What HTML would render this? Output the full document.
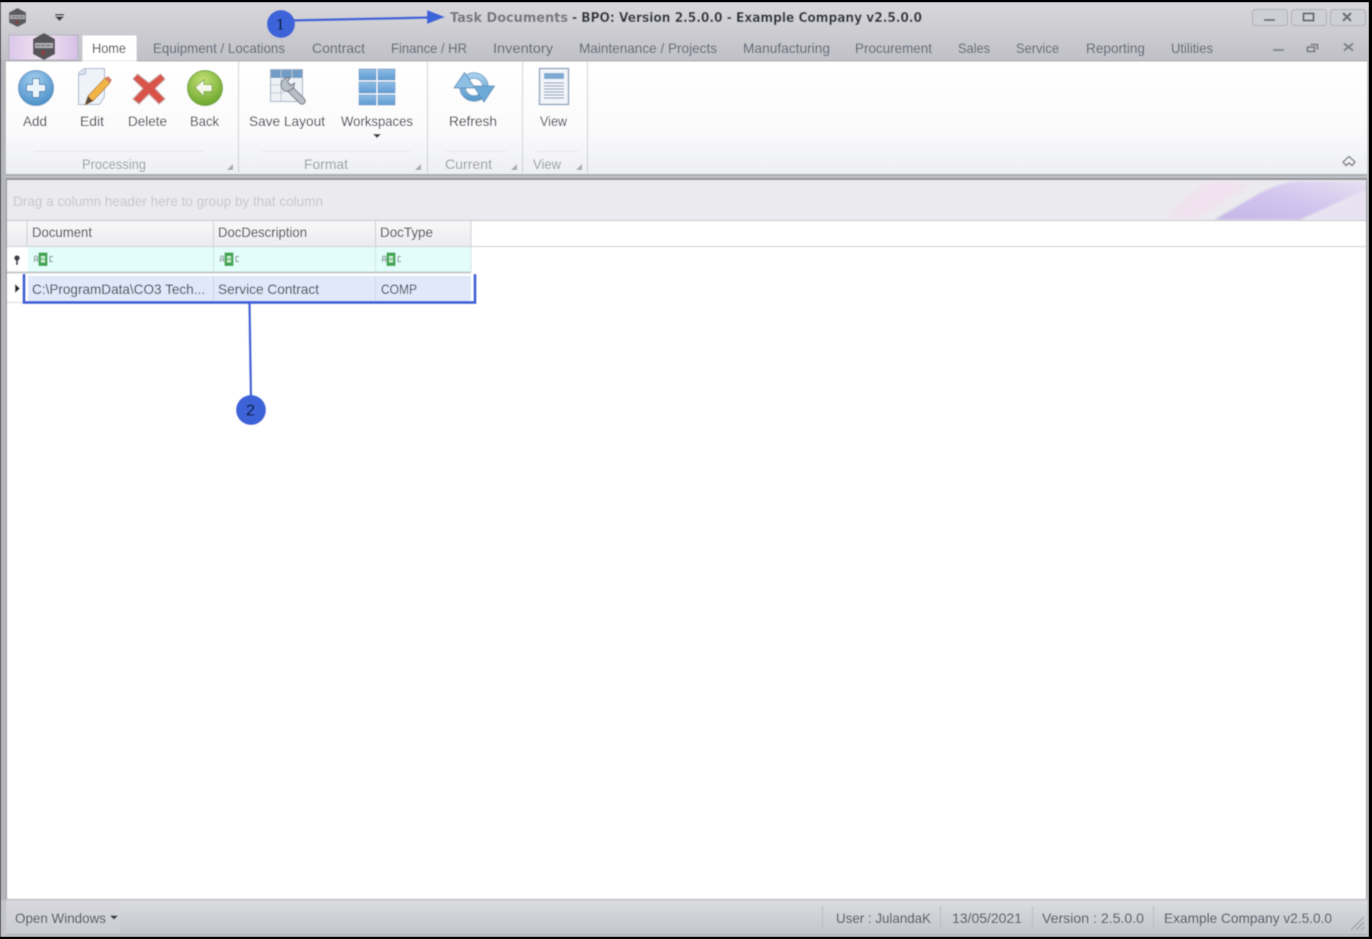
<!DOCTYPE html>
<html lang="en"><head><meta charset="utf-8"><title>Task Documents</title>
<style>
html,body{margin:0;padding:0;background:#000;width:1372px;height:939px;overflow:hidden}
svg{display:block}
text{font-family:"Liberation Sans",sans-serif;font-size:14px;fill:#4b4f5c}
.d{fill:#33363f}
.t{fill:#5d6272}
.g{fill:#9a9da3}
</style></head><body>
<svg width="1372" height="939" viewBox="0 0 1372 939" xmlns="http://www.w3.org/2000/svg">
<defs>
<linearGradient id="top" x1="0" y1="0" x2="0" y2="1"><stop offset="0" stop-color="#d8d8dc"/><stop offset="1" stop-color="#bfc0c6"/></linearGradient>
<linearGradient id="rib" x1="0" y1="0" x2="0" y2="1"><stop offset="0" stop-color="#fff"/><stop offset=".6" stop-color="#fbfbfc"/><stop offset="1" stop-color="#eeeff2"/></linearGradient>
<linearGradient id="st" x1="0" y1="0" x2="0" y2="1"><stop offset="0" stop-color="#dcdde0"/><stop offset="1" stop-color="#c3c5cc"/></linearGradient>
<linearGradient id="hd" x1="0" y1="0" x2="0" y2="1"><stop offset="0" stop-color="#f8f8f9"/><stop offset="1" stop-color="#ececef"/></linearGradient>
<linearGradient id="logo" x1="0" y1="0" x2="1" y2="0"><stop offset="0" stop-color="#dcc8ea"/><stop offset=".5" stop-color="#f0e4f2"/><stop offset="1" stop-color="#d6c0e6"/></linearGradient>
<radialGradient id="blue" cx=".45" cy=".3" r=".8"><stop offset="0" stop-color="#a9d2ee"/><stop offset="1" stop-color="#3d86c4"/></radialGradient>
<radialGradient id="green" cx=".45" cy=".3" r=".8"><stop offset="0" stop-color="#c5e176"/><stop offset="1" stop-color="#5f9e22"/></radialGradient>
<linearGradient id="cell" x1="0" y1="0" x2="0" y2="1"><stop offset="0" stop-color="#8fbce4"/><stop offset="1" stop-color="#5f9bd2"/></linearGradient>
<linearGradient id="sw1" x1="0" y1="1" x2="1" y2="0"><stop offset="0" stop-color="#c4b6e6"/><stop offset=".5" stop-color="#d2c4ee"/><stop offset="1" stop-color="#e6dff2"/></linearGradient>
<linearGradient id="ring" x1="0" y1="0" x2="0" y2="1"><stop offset="0" stop-color="#a6cfec"/><stop offset="1" stop-color="#5d9ccd"/></linearGradient>
<filter id="soft" x="0" y="0" width="100%" height="100%"><feGaussianBlur stdDeviation="0.45"/></filter>
<filter id="sw" x="-20%" y="-20%" width="140%" height="140%"><feGaussianBlur stdDeviation="4"/></filter>
<filter id="sw2" x="-10%" y="-10%" width="120%" height="120%"><feGaussianBlur stdDeviation="1.200"/></filter>
<clipPath id="gp"><rect x="1100" y="181" width="266" height="39"/></clipPath>
</defs>
<g filter="url(#soft)">
<rect x="0" y="2" width="1369" height="935" fill="#c4c5ca"/>
<rect x="0" y="2" width="1369" height="60" fill="url(#top)"/>
<rect x="0" y="2" width="1" height="935" fill="#6d6e72"/>
<rect x="1" y="60" width="5" height="840" fill="#b6b7bc"/>

<!-- title bar left -->
<path d="M17.500 8l8.500 4.500v10l-8.500 4.500l-8.500-4.500v-10z" fill="#5a5a5f"/>
<rect x="10" y="15" width="15" height="4" fill="#a9a9ac"/>
<path d="M12 17h11" stroke="#55555a" stroke-width="1" stroke-dasharray="3 1"/>
<path d="M15 21l4 0l-2 4z" fill="#8d3a3d"/>
<rect x="55" y="14" width="9" height="1.500" fill="#3a3a40"/>
<path d="M55 16.500h9l-4.500 4.500z" fill="#3a3a40"/>

<text x="450" y="22" textLength="118" lengthAdjust="spacingAndGlyphs" style="font-family:'DejaVu Sans',sans-serif;font-size:13px;font-weight:bold;fill:#74757f">Task Documents</text>
<text x="572" y="22" textLength="350" lengthAdjust="spacingAndGlyphs" style="font-family:'DejaVu Sans',sans-serif;font-size:13px;font-weight:bold;fill:#2c2f38">- BPO: Version 2.5.0.0 - Example Company v2.5.0.0</text>

<!-- window buttons -->
<g fill="#cfd0d5" stroke="#aeb0b6">
<rect x="1252.500" y="9.500" width="35" height="16" rx="3"/>
<rect x="1291.500" y="9.500" width="35" height="16" rx="3"/>
<rect x="1330.500" y="9.500" width="35" height="16" rx="3"/>
</g>
<rect x="1264" y="19" width="11" height="2" fill="#74767e"/>
<rect x="1303.500" y="13.500" width="10" height="7" fill="none" stroke="#6a6c74" stroke-width="2"/>
<path d="M1343 13l8 8M1351 13l-8 8" stroke="#6a6c74" stroke-width="2.200"/>

<!-- logo tab -->
<rect x="9" y="35" width="69" height="25" fill="url(#logo)" stroke="#b5b3bd"/>
<path d="M44 33l11 6v15l-11 6l-11-6v-15z" fill="#55555a"/>
<rect x="35" y="43" width="18" height="5" fill="#b0b0b3"/>
<path d="M36 45.500h16" stroke="#47474c" stroke-dasharray="4 1"/>
<path d="M41 51h5l-3 6z" fill="#8d3a3d"/>

<!-- tabs -->
<path d="M82 61V36q0-1 1-1h53q1 0 1 1v25z" fill="#fff" stroke="#c9cace"/>
<text class="d" x="92" y="53" textLength="34" lengthAdjust="spacingAndGlyphs">Home</text>
<text class="t" x="153" y="53" textLength="132" lengthAdjust="spacingAndGlyphs">Equipment / Locations</text>
<text class="t" x="312" y="53" textLength="53" lengthAdjust="spacingAndGlyphs">Contract</text>
<text class="t" x="391" y="53" textLength="76" lengthAdjust="spacingAndGlyphs">Finance / HR</text>
<text class="t" x="493" y="53" textLength="60" lengthAdjust="spacingAndGlyphs">Inventory</text>
<text class="t" x="579" y="53" textLength="138" lengthAdjust="spacingAndGlyphs">Maintenance / Projects</text>
<text class="t" x="743" y="53" textLength="87" lengthAdjust="spacingAndGlyphs">Manufacturing</text>
<text class="t" x="855" y="53" textLength="77" lengthAdjust="spacingAndGlyphs">Procurement</text>
<text class="t" x="958" y="53" textLength="32" lengthAdjust="spacingAndGlyphs">Sales</text>
<text class="t" x="1016" y="53" textLength="43" lengthAdjust="spacingAndGlyphs">Service</text>
<text class="t" x="1086" y="53" textLength="59" lengthAdjust="spacingAndGlyphs">Reporting</text>
<text class="t" x="1171" y="53" textLength="42" lengthAdjust="spacingAndGlyphs">Utilities</text>
<rect x="1273" y="49" width="11" height="2" fill="#84868e"/>
<path d="M1310.500 44.500h7v5M1307.500 47h7v4.500h-7z" fill="none" stroke="#74767e" stroke-width="1.600"/>
<path d="M1344 43.500l9 7M1353 43.500l-9 7" stroke="#7c7e86" stroke-width="2"/>

<!-- ribbon -->
<rect x="6" y="61" width="1361" height="113" fill="url(#rib)"/>
<path d="M6 61H82M137 61H1367" stroke="#a8aab0"/>
<rect x="6" y="174" width="1361" height="2" fill="#a9abb1"/>
<g stroke="#cfd0d5"><path d="M238.500 62V173M427.500 62V173M522.500 62V173M587.500 62V173"/></g>
<g stroke="#e4e5e8"><path d="M34 151.500H203M262 151.500H410M446 151.500H506M536 151.500H578"/></g>

<!-- add -->
<circle cx="36" cy="88" r="17.500" fill="url(#blue)" stroke="#5b93c4"/>
<path d="M32.500 78.500h7v6h6v7h-6v6h-7v-6h-6v-7h6z" fill="#eaf4fb" stroke="#3f7db6" stroke-linejoin="round"/>
<!-- edit -->
<path d="M78.500 73l6-4.500h20v28l-5 8h-21z" fill="#eef3fa" stroke="#a6b5ce"/>
<path d="M78.500 75l7-1v-5" fill="#dbe4f1" stroke="#a6b5ce"/>
<path d="M85 105l3-9l17-18l5 5l-17 18z" fill="#f0b545" stroke="#b87c22" stroke-width=".8"/>
<path d="M105 78l3-2l4 4l-2 3z" fill="#d67c6c"/>
<path d="M85 105l3-9l5 5z" fill="#5a4a3c"/>
<!-- delete -->
<path d="M137.500 74l11.500 9l11.500-9l4.500 5l-10 9.500l10 10.500l-6 5l-10-10l-10 10l-6-5l10-10.500l-10-9.500z" fill="#d9534a" stroke="#c4a4a2" stroke-width="1" stroke-linejoin="round"/>
<!-- back -->
<circle cx="205" cy="88" r="17.500" fill="url(#green)" stroke="#72a438"/>
<path d="M195 87.500l9-8v5h8v7h-8v5z" fill="#f3f8e8" stroke="#6b9b2f" stroke-width=".8" stroke-linejoin="round"/>
<text class="d" x="23" y="126" textLength="24" lengthAdjust="spacingAndGlyphs">Add</text>
<text class="d" x="80" y="126" textLength="24" lengthAdjust="spacingAndGlyphs">Edit</text>
<text class="d" x="128" y="126" textLength="39" lengthAdjust="spacingAndGlyphs">Delete</text>
<text class="d" x="190" y="126" textLength="29" lengthAdjust="spacingAndGlyphs">Back</text>
<text class="g" x="82" y="169" textLength="64" lengthAdjust="spacingAndGlyphs">Processing</text>

<!-- save layout -->
<rect x="270.500" y="69.500" width="32" height="32" fill="#eef2f7" stroke="#9fb0c2"/>
<rect x="271" y="70" width="31" height="8" fill="#6f9cc6"/>
<path d="M281 70V102M292 70V78M271 85H284M271 93H284" stroke="#bcc9d6"/>
<path d="M288 87L302 101" stroke="#68717b" stroke-width="7.500" stroke-linecap="round"/>
<path d="M288 87L302 101" stroke="#b9bfc6" stroke-width="5.500" stroke-linecap="round"/>
<path d="M281 84a8 8 0 0 1 9.500-6.500l-3 4l3 4l4-2.500a8 8 0 0 1-10 8a7 7 0 0 1-3.500-7z" fill="#b9bfc6" stroke="#68717b"/>
<!-- workspaces -->
<g fill="url(#cell)" stroke="#6f9ccb" stroke-width=".7">
<rect x="359" y="69" width="17" height="11"/><rect x="378" y="69" width="17" height="11"/>
<rect x="359" y="82" width="17" height="11"/><rect x="378" y="82" width="17" height="11"/>
<rect x="359" y="95" width="17" height="10"/><rect x="378" y="95" width="17" height="10"/>
</g>
<text class="d" x="249" y="126" textLength="76" lengthAdjust="spacingAndGlyphs">Save Layout</text>
<text class="d" x="341" y="126" textLength="72" lengthAdjust="spacingAndGlyphs">Workspaces</text>
<path d="M373 134h8l-4 4z" fill="#33353c"/>
<text class="g" x="304" y="169" textLength="44" lengthAdjust="spacingAndGlyphs">Format</text>

<!-- refresh -->
<circle cx="474" cy="87" r="11.500" fill="none" stroke="#5e93bd" stroke-width="6.500"/>
<circle cx="474" cy="87" r="11.500" fill="none" stroke="url(#ring)" stroke-width="5"/>
<path d="M454 88l10.500-15.500l10.500 15.500z" fill="#8fc0e4" stroke="#5e93bd" stroke-linejoin="round"/>
<path d="M473.500 86l10.500 16l10.500-16z" fill="#6eaad8" stroke="#5e93bd" stroke-linejoin="round"/>
<text class="d" x="449" y="126" textLength="48" lengthAdjust="spacingAndGlyphs">Refresh</text>
<text class="g" x="445" y="169" textLength="47" lengthAdjust="spacingAndGlyphs">Current</text>

<!-- view -->
<rect x="539.500" y="68.500" width="29" height="36" fill="#f2f5fa" stroke="#8fa3bc" stroke-width="1.400"/>
<rect x="544" y="73" width="20" height="6" fill="#7fa9d3"/>
<path d="M544 83H564M544 86H564M544 89H564M544 92H564M544 95H564M544 98H564" stroke="#8097b3"/>
<text class="d" x="540" y="126" textLength="27" lengthAdjust="spacingAndGlyphs">View</text>
<text class="g" x="533" y="169" textLength="28" lengthAdjust="spacingAndGlyphs">View</text>

<g fill="#a8aaae">
<path d="M233 164v6h-6z"/><path d="M421 164v6h-6z"/><path d="M517 164v6h-6z"/><path d="M582 164v6h-6z"/>
</g>
<path d="M1343 162l6-5.500l6 5.500l-3 3.500l-3-2.500l-3 2.500z" fill="none" stroke="#7e8086" stroke-width="1.500" stroke-linejoin="round"/>

<!-- grid area -->
<rect x="6" y="178" width="1361" height="722" fill="#8e9095"/>
<rect x="7" y="180" width="1359" height="719" fill="#fff"/>
<rect x="7" y="180" width="1359" height="40" fill="#ebebef"/>
<g clip-path="url(#gp)">
<path d="M1165 217l42-36h48l-60 39z" fill="#f2dff0" opacity=".8" filter="url(#sw)"/>
<path d="M1214 220l46-27q16-8 32-12h74v9l-66 30z" fill="url(#sw1)" filter="url(#sw2)"/>
<path d="M1303 220l63-28v28z" fill="#e7e1f2" filter="url(#sw2)"/>
</g>
<text x="13" y="206" textLength="310" lengthAdjust="spacingAndGlyphs" style="fill:#c6c7cb">Drag a column header here to group by that column</text>
<path d="M7 220.500H1366" stroke="#c6c7cb"/>

<!-- headers -->
<rect x="7" y="221" width="464" height="25" fill="url(#hd)"/>
<path d="M27 221V246M213.500 221V246M375.500 221V246M471 221V246" stroke="#cdced2"/>
<path d="M7 246.500H1366" stroke="#cdced2"/>
<text class="d" x="32" y="237" textLength="60" lengthAdjust="spacingAndGlyphs">Document</text>
<text class="d" x="218" y="237" textLength="89" lengthAdjust="spacingAndGlyphs">DocDescription</text>
<text class="d" x="380" y="237" textLength="53" lengthAdjust="spacingAndGlyphs">DocType</text>

<!-- filter row -->
<rect x="28" y="247" width="443" height="25" fill="#e2fdfa"/>
<path d="M213.500 247V272M375.500 247V272M471 247V272" stroke="#d3e3e3"/>
<path d="M7 272.500H471" stroke="#c6c8cc" stroke-width="2"/>
<circle cx="17" cy="258" r="2.800" fill="#3c3e44"/><rect x="16" y="259" width="2" height="6" fill="#3c3e44"/>
<g id="abc">
<rect x="38.500" y="252.500" width="9" height="13.500" fill="#3da650"/>
<rect x="41" y="256" width="4" height="6.500" fill="#cdeed3"/>
<path d="M41 259.200h4" stroke="#3da650"/>
<path d="M34.500 262v-5l1-1h1l1 1v5M34.500 259.500h3" fill="none" stroke="#7f8c90"/>
<path d="M53 256.500h-3v5h3" fill="none" stroke="#7f8c90"/>
</g>
<use href="#abc" x="186"/>
<use href="#abc" x="348"/>

<!-- data row -->
<rect x="28" y="276" width="443" height="25" fill="#e0e8f9"/>
<path d="M213.500 276V301M375.500 276V301" stroke="#d0d6e4"/>
<path d="M7 302.500H28" stroke="#d8d8dc"/>
<path d="M15 284l5 4.500l-5 4.500z" fill="#23242a"/>
<text class="d" x="32" y="294" textLength="173" lengthAdjust="spacingAndGlyphs">C:\ProgramData\CO3 Tech...</text>
<text class="d" x="218" y="294" textLength="101" lengthAdjust="spacingAndGlyphs">Service Contract</text>
<text class="d" x="381" y="294" textLength="36" lengthAdjust="spacingAndGlyphs">COMP</text>

<!-- annotations -->
<path d="M24 274V302.500H475V274" fill="none" stroke="#3c64d8" stroke-width="3"/>
<path d="M249.500 303L251 400" stroke="#3c64d8" stroke-width="2.500"/>
<circle cx="251" cy="410" r="15" fill="#3c64d8"/>
<text x="250.500" y="415.500" text-anchor="middle" style="font-size:16px;fill:#000">2</text>
<path d="M290 20.500L430 17.500" stroke="#3c64d8" stroke-width="2.500"/>
<path d="M445 17l-18-7v14z" fill="#3c64d8"/>
<circle cx="281" cy="24" r="14" fill="#3c64d8"/>
<text x="280.500" y="29.500" text-anchor="middle" style="font-family:'DejaVu Serif','Liberation Serif',serif;font-size:14px;fill:#000">1</text>

<!-- status bar -->
<rect x="6" y="899" width="1361" height="36" fill="url(#st)"/>
<rect x="6" y="899" width="114" height="36" fill="#d3d4da" opacity=".5"/>
<path d="M6 899.500H1367" stroke="#a9abb1"/>
<path d="M6 934.500H1367" stroke="#a9abb1"/>
<text x="15" y="923" textLength="91" lengthAdjust="spacingAndGlyphs" style="fill:#45495a">Open Windows</text>
<path d="M110 915.500h8l-4 4z" fill="#33353c"/>
<path d="M822.500 906V929M940.500 906V929M1032.500 906V929M1153.500 906V929" stroke="#b9bbc1"/>
<text x="836" y="923" textLength="95" lengthAdjust="spacingAndGlyphs" style="fill:#45495a">User : JulandaK</text>
<text x="952" y="923" textLength="70" lengthAdjust="spacingAndGlyphs" style="fill:#45495a">13/05/2021</text>
<text x="1042" y="923" textLength="102" lengthAdjust="spacingAndGlyphs" style="fill:#45495a">Version : 2.5.0.0</text>
<text x="1164" y="923" textLength="168" lengthAdjust="spacingAndGlyphs" style="fill:#45495a">Example Company v2.5.0.0</text>
<path d="M1351 930l13-13M1356 930l8-8M1361 930l3-3" stroke="#9b9da3" stroke-width="1.200"/>
</g>
</svg>
</body></html>
